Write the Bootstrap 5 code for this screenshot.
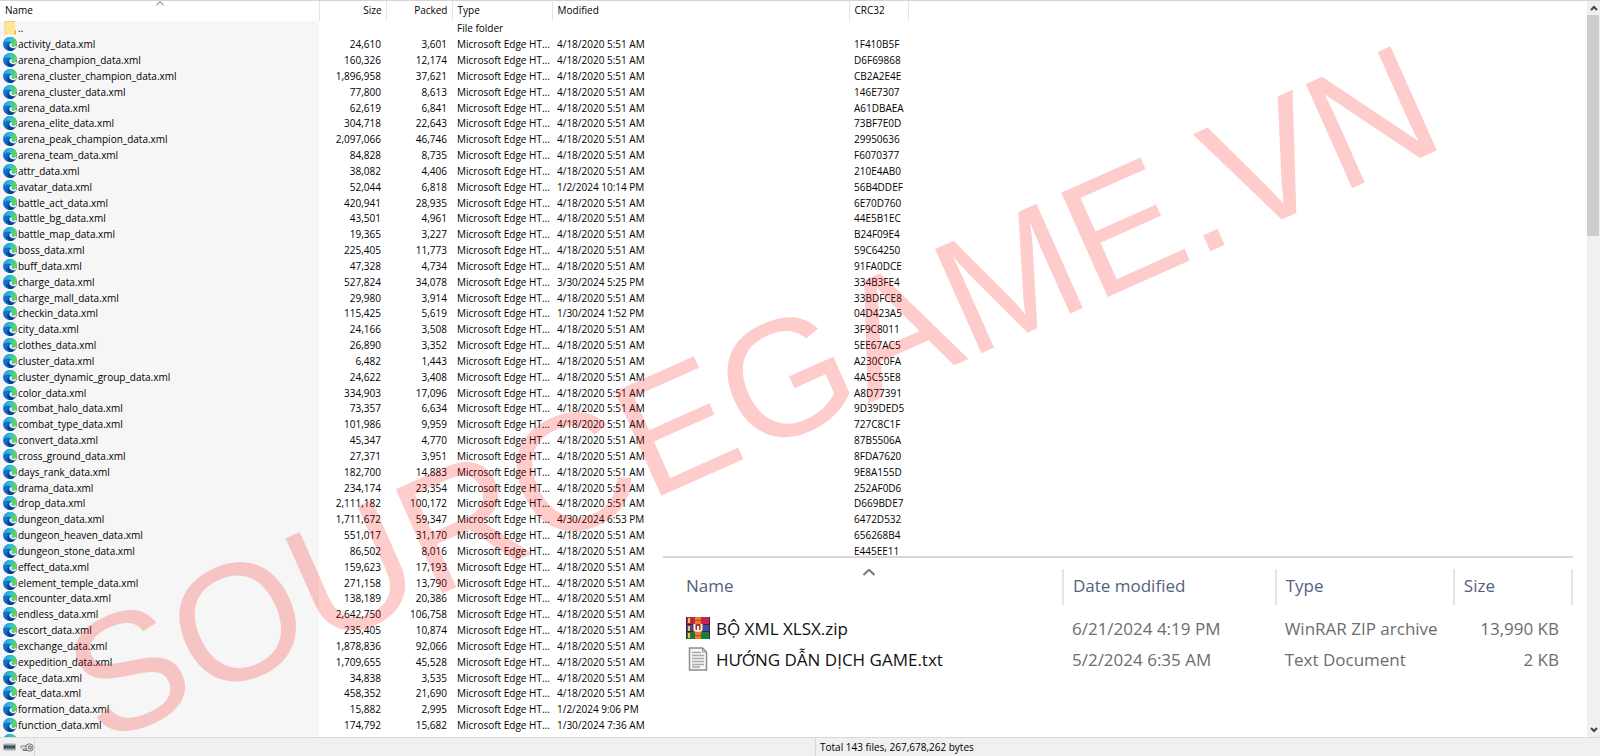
<!DOCTYPE html>
<html lang="en">
<head>
<meta charset="utf-8">
<meta name="viewport" content="width=device-width, initial-scale=1">
<title>Archive contents</title>
<link rel="stylesheet" href="https://cdn.jsdelivr.net/npm/bootstrap@5.3.0/dist/css/bootstrap.min.css">
<style>
  body { font-family: "Open Sans", "Noto Sans", sans-serif; font-size: 10px; line-height: 15px; color: #000; background: #fff; }
  .frame { border-top: 1px solid #d4d4d4; }
  .listing { table-layout: fixed; margin: 0; color: inherit; line-height: 15px; }
  .listing th, .listing td { padding: 0 4px 0 5px; overflow: hidden; white-space: nowrap; color: inherit; background: none; box-shadow: none; vertical-align: top; }
  .listing th { height: 20px; padding-top: 2px; font-weight: 400; border-right: 1px solid #e5e5e5; background: #fff; position: relative; }
  .listing th:last-child { border-right: 0; }
  .listing .num { text-align: right; }
  .listing td { height: 16px; }
  .listing td.num { padding-right: 5px; }
  .listing tr:nth-child(6n) td { height: 15px; }
  .listing td:first-child { background: #f6f6f6; padding-left: 3px; }
  .listing svg { width: 14px; height: 14px; margin-right: 1px; vertical-align: top; overflow: visible; }
  .sorter { position: absolute; left: 50%; top: 0; }
  .c-name { width: 319px; } .c-size { width: 67px; } .c-pack { width: 66px; }
  .c-type { width: 100px; } .c-mod { width: 297px; } .c-crc { width: 59px; }
  .stamp { left: 47.4%; top: 53.3%; transform: translate(-50%, -50%) rotate(-24deg); font: 400 166px/200px "Liberation Sans", Arial, sans-serif; color: rgba(255, 0, 0, .2); white-space: nowrap; pointer-events: none; }
  .explorer { right: 14px; bottom: 0; width: 910px; height: 181px; background: #fff; border-top: 2px solid #d9d9d9; font-size: 17px; }
  .explorer table { table-layout: fixed; margin-top: 11px; line-height: 31px; }
  .explorer th, .explorer td { padding: 0 0 0 9px; white-space: nowrap; }
  .explorer th { height: 36px; padding-bottom: 4px; font-weight: 400; color: #55607f; border-right: 2px solid #e5e5e5; position: relative; }
  .explorer td { color: #6d6d6d; }
  .explorer th:first-child, .explorer td:first-child { padding-left: 23px; }
  .explorer td:first-child { color: #111; }
  .explorer td:last-child { text-align: right; padding-right: 13px; }
  .explorer td svg { width: 24px; height: 24px; margin-right: 6px; vertical-align: -5px; }
  .explorer td.gutter { height: 8px; }
  .scroller { width: 13px; background: #f0f0f0; }
  .scroller button { width: 13px; height: 14px; border: 0; padding: 0; background: none; line-height: 0; }
  .thumb { height: 221px; background: #cdcdcd; margin-right: 1px; }
  .status { height: 19px; background: #f0f0f0; border-top: 1px solid #d9d9d9; line-height: 18px; }
  .status-icons { width: 35px; border-right: 1px solid #d9d9d9; padding-left: 3px; }
  .status-left { width: 51%; border-right: 1px solid #d9d9d9; }
</style>
</head>
<body>
<svg width="0" height="0" class="position-absolute" aria-hidden="true">
  <defs>
    <linearGradient id="gTop" x1="0" y1="0" x2="1" y2="0.4"><stop offset="0" stop-color="#1b8fd8"/><stop offset=".5" stop-color="#2ebfdc"/><stop offset="1" stop-color="#62d84e"/></linearGradient>
    <linearGradient id="gSide" x1="0" y1="0" x2="1" y2="1"><stop offset="0" stop-color="#1686d9"/><stop offset="1" stop-color="#0c4aa0"/></linearGradient>
  </defs>
  <symbol id="edge" viewBox="0 0 14 14">
    <circle cx="7" cy="7" r="7" fill="url(#gSide)"/>
    <path d="M.3 6C1 2.400 3.800 0 7.200 0 11 0 14 2.800 14 6.200 14 8.400 12.300 9.700 10.400 9.700 8.900 9.700 8.300 9 8.700 8.200 9.300 7 8.400 4.800 5.800 4.500 3.500 4.300 1.300 5 .3 6Z" fill="url(#gTop)"/>
    <path d="M5.500 7C5.300 10 7.500 12.300 12.300 11.400 11 13.100 9.200 14 7 14 4.500 13.500 3.400 9.600 5.500 7Z" fill="#0b3f91"/>
    <path d="M8.500 5.900C8.900 6.800 9 7.500 8.700 8.200 8.300 9 8.900 9.700 10.400 9.700 11.600 9.700 12.700 9.200 13.400 8.300 13.300 9.500 12.800 10.500 12.200 11.100 9.300 11.900 6.400 10.300 6.400 8.100 6.400 7 7.500 5.800 8.500 5.900Z" fill="#f6f9fc"/>
  </symbol>
  <symbol id="folder" viewBox="0 0 14 14">
    <path d="M2 .5h10v8l1 1v4H2z" fill="#ffe597"/><path d="M12 .5v8l-1 3v2h2v-4l-1-1" fill="#e9bf52"/><path d="M2 .5h10M2 .5v13" stroke="#f0cf74" fill="none"/>
  </symbol>
</svg>

<div class="frame d-flex flex-column vh-100 overflow-hidden">
  <div class="d-flex flex-grow-1 overflow-hidden">
    <main class="flex-grow-1 position-relative overflow-hidden">
      <table class="listing table-borderless w-100">
        <colgroup><col class="c-name"><col class="c-size"><col class="c-pack"><col class="c-type"><col class="c-mod"><col class="c-crc"><col></colgroup>
        <thead>
          <tr>
            <th scope="col">Name
              <svg class="sorter" viewBox="0 0 14 14" fill="none" stroke="#666"><path d="M-2.500 4 1 .7 4.500 4"/></svg></th>
            <th scope="col" class="num">Size</th><th scope="col" class="num">Packed</th>
            <th scope="col">Type</th><th scope="col">Modified</th><th scope="col">CRC32</th><th></th>
          </tr>
        </thead>
        <tbody id="files">
          <tr><td><svg><use href="#folder"/></svg>..</td><td></td><td></td><td>File folder</td><td></td><td></td><td></td></tr>
        </tbody>
      </table>

      <section class="explorer position-absolute">
        <table class="w-100">
          <colgroup><col style="width:44%"><col style="width:23.4%"><col style="width:19.6%"><col></colgroup>
          <thead>
            <tr><th scope="col">Name
              <svg class="position-absolute top-0 start-50" width="14" height="9" viewBox="0 0 14 9" fill="none" stroke="#777" stroke-width="2"><path d="M1.500 6 7 .8 12.500 6"/></svg></th>
              <th scope="col">Date modified</th><th scope="col">Type</th><th scope="col">Size</th></tr>
          </thead>
          <tbody>
            <tr><td class="gutter" colspan="4"></td></tr>
            <tr>
              <td><svg viewBox="0 0 24 24">
                <path fill="#c9224e" d="M0 1h24v8H0z"/><path fill="#4545b5" d="M0 9h24v7H0z"/><path fill="#16803a" d="M0 16h24v7H0z"/>
                <path d="M0 8.500h24M0 15.500h24M.5 1v22M23.500 1v22" stroke="#3a2230" fill="none"/>
                <path d="M3 2v5M3 10v5M3 17v5" stroke="#f5c84a" stroke-width="2"/>
                <path d="M6 2v5M6 10v5M6 17v5" stroke="#8a2a50" stroke-width="1"/>
                <path fill="#f07c1e" d="M9 1h6v22H9z"/><path fill="#b55213" d="M9 19h6v1H9zM9 4h6v1H9z"/>
                <path fill="#9c3a2c" d="M7 8h10v8H7z"/><path d="M8.500 8v5.500c0 2 7 2 7 0V8M12 10v5" fill="none" stroke="#f6efe9" stroke-width="2"/>
              </svg>BỘ XML XLSX.zip</td>
              <td>6/21/2024 4:19 PM</td><td>WinRAR ZIP archive</td><td>13,990 KB</td>
            </tr>
            <tr>
              <td><svg viewBox="0 0 24 24">
                <path d="M3.500 1h13l4 4v18h-17z" fill="#f7f7f7" stroke="#8d8d8d" stroke-width="1.500"/>
                <path d="M16.500 1v4h4" fill="none" stroke="#8d8d8d"/>
                <path d="M6 5.500h9M6 8.500h12M6 11.500h12M6 14.500h12M6 17.500h12M6 20h8" stroke="#a3a9ad" stroke-width="1.400"/>
              </svg>HƯỚNG DẪN DỊCH GAME.txt</td>
              <td>5/2/2024 6:35 AM</td><td>Text Document</td><td>2 KB</td>
            </tr>
          </tbody>
        </table>
      </section>

      <div class="stamp position-absolute">SOURCEGAME.VN</div>
    </main>

    <div class="scroller d-flex flex-column flex-shrink-0">
      <button type="button" aria-label="Scroll up"><svg width="8" height="6" viewBox="0 0 8 6" fill="none" stroke="#444" stroke-width="2"><path d="M1 5 4 2l3 3"/></svg></button>
      <div class="thumb"></div>
      <button type="button" class="mt-auto" aria-label="Scroll down"><svg width="8" height="6" viewBox="0 0 8 6" fill="none" stroke="#444" stroke-width="2"><path d="M1 1l3 3 3-3"/></svg></button>
    </div>
  </div>

  <footer class="status d-flex flex-shrink-0 align-items-stretch">
    <div class="status-left d-flex">
      <div class="status-icons d-flex align-items-center gap-1">
        <svg width="13" height="8" viewBox="0 0 13 8"><rect y=".5" width="13" height="7" rx="1.500" fill="#a4b0b5"/><rect x="1" y="2.500" width="11" height="3" fill="#33414a"/><path d="M3 4h7" stroke="#81919a" stroke-dasharray="1 1"/></svg>
        <svg width="14" height="9" viewBox="0 0 14 9" fill="none" stroke="#777"><circle cx="9.500" cy="4.500" r="3.700" fill="#e7e7e7"/><circle cx="10" cy="4.500" r="1.500" stroke="#555"/><path d="M6 3H1.500L.5 4.200 2 5.500M6 6H3v1.500h4"/></svg>
      </div>
    </div>
    <div class="px-1 pt-0">Total 143 files, 267,678,262 bytes</div>
  </footer>
</div>

<script src="https://cdn.jsdelivr.net/npm/bootstrap@5.3.0/dist/js/bootstrap.bundle.min.js"></script>
<script>
  // name | size | packed | CRC32 | modified (blank: the common date)
  const common = '4/18/2020 5:51 AM';
  const data = `activity|24,610|3,601|1F410B5F
arena_champion|160,326|12,174|D6F69868
arena_cluster_champion|1,896,958|37,621|CB2A2E4E
arena_cluster|77,800|8,613|146E7307
arena|62,619|6,841|A61DBAEA
arena_elite|304,718|22,643|73BF7E0D
arena_peak_champion|2,097,066|46,746|29950636
arena_team|84,828|8,735|F6070377
attr|38,082|4,406|210E4AB0
avatar|52,044|6,818|56B4DDEF|1/2/2024 10:14 PM
battle_act|420,941|28,935|6E70D760
battle_bg|43,501|4,961|44E5B1EC
battle_map|19,365|3,227|B24F09E4
boss|225,405|11,773|59C64250
buff|47,328|4,734|91FA0DCE
charge|527,824|34,078|334B3FE4|3/30/2024 5:25 PM
charge_mall|29,980|3,914|33BDFCE8
checkin|115,425|5,619|04D423A5|1/30/2024 1:52 PM
city|24,166|3,508|3F9C8011
clothes|26,890|3,352|5EE67AC5
cluster|6,482|1,443|A230C0FA
cluster_dynamic_group|24,622|3,408|4A5C55E8
color|334,903|17,096|A8D77391
combat_halo|73,357|6,634|9D39DED5
combat_type|101,986|9,959|727C8C1F
convert|45,347|4,770|87B5506A
cross_ground|27,371|3,951|8FDA7620
days_rank|182,700|14,883|9E8A155D
drama|234,174|23,354|252AF0D6
drop|2,111,182|100,172|D669BDE7
dungeon|1,711,672|59,347|6472D532|4/30/2024 6:53 PM
dungeon_heaven|551,017|31,170|656268B4
dungeon_stone|86,502|8,016|E445EE11
effect|159,623|17,193|
element_temple|271,158|13,790|
encounter|138,189|20,386|
endless|2,642,750|106,758|
escort|235,405|10,874|
exchange|1,878,836|92,066|
expedition|1,709,655|45,528|
face|34,838|3,535|
feat|458,352|21,690|
formation|15,882|2,995||1/2/2024 9:06 PM
function|174,792|15,682||1/30/2024 7:36 AM`;
  const icon = '<svg><use href="#edge"/></svg>';
  const rows = data.split('\n').map(line => {
    const [name, size, packed, crc, date] = line.split('|');
    return `<tr><td>${icon}${name}_data.xml</td><td class="num">${size}</td><td class="num">${packed}</td><td>Microsoft Edge HT...</td><td>${date || common}</td><td>${crc || ''}</td><td></td></tr>`;
  });
  rows.push(`<tr><td>${icon}</td><td></td><td></td><td></td><td></td><td></td><td></td></tr>`);
  document.getElementById('files').insertAdjacentHTML('beforeend', rows.join(''));
</script>
</body>
</html>
